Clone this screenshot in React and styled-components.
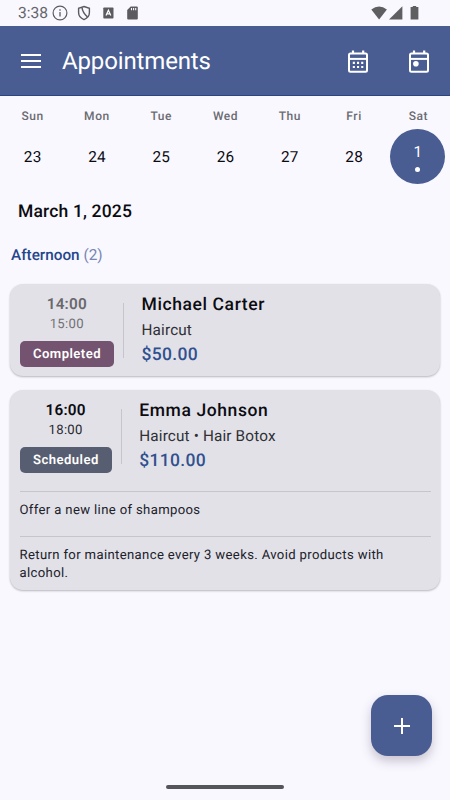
import React from "react";
import styled, { createGlobalStyle } from "styled-components";

const days = [
  { name: "Sun", date: 23 },
  { name: "Mon", date: 24 },
  { name: "Tue", date: 25 },
  { name: "Wed", date: 26 },
  { name: "Thu", date: 27 },
  { name: "Fri", date: 28 },
  { name: "Sat", date: 1, selected: true },
];

const appointments = [
  {
    start: "14:00",
    end: "15:00",
    status: "Completed",
    client: "Michael Carter",
    services: "Haircut",
    price: "$50.00",
    notes: [],
  },
  {
    start: "16:00",
    end: "18:00",
    status: "Scheduled",
    client: "Emma Johnson",
    services: "Haircut • Hair Botox",
    price: "$110.00",
    notes: [
      "Offer a new line of shampoos",
      "Return for maintenance every 3 weeks. Avoid products with alcohol.",
    ],
  },
];

const StatusIcons = () => (
  <StatusGroup>
    <svg width="16" height="16" viewBox="0 0 16 16">
      <circle cx="8" cy="8" r="6.9" fill="none" stroke="#5c5c60" strokeWidth="1.2" />
      <path d="M8 7v4.6M8 4.3v1.4" stroke="#5c5c60" strokeWidth="1.3" />
    </svg>
    <svg width="14" height="16" viewBox="0 0 14 16">
      <path
        d="M7 1.5 12.4 3.3v4.3c0 3.3-2.2 5.8-5.4 7C3.8 13.4 1.6 10.9 1.6 7.6V3.3Z"
        fill="none"
        stroke="#5c5c60"
        strokeWidth="1.4"
      />
      <path d="M5 2.5Q5.5 7.5 10.5 12" fill="none" stroke="#5c5c60" strokeWidth="1.5" />
    </svg>
    <svg width="11" height="12" viewBox="0 0 11 12">
      <rect x="0.3" y="0.5" width="10.2" height="11" rx="0.8" fill="#5c5c60" />
      <path d="M3 8.6 5.4 3.2 7.8 8.6M3.9 6.9h3" fill="none" stroke="#fff" strokeWidth="1.2" />
    </svg>
    <svg width="11" height="14" viewBox="0 0 11 14">
      <path d="M3.7.5h6.1q1 0 1 1v11q0 1-1 1H1.2q-1 0-1-1V4Z" fill="#5c5c60" />
      <path d="M4.5 2v2.2M6.6 2v2.2M8.7 2v2.2" stroke="#f9f8ff" strokeWidth="1.1" />
    </svg>
  </StatusGroup>
);

const SignalIcons = () => (
  <svg width="50" height="16" viewBox="0 0 50 16">
    <path d="M.3 4.6Q8.1-1.4 15.9 4.6L8.1 14.4Z" fill="#5f5f62" />
    <path d="M31.4 1.2v13.4H18Z" fill="#5f5f62" />
    <path d="M41.8 1.1h3.4v1h2.2v12.500h-7.800V2.100h2.200Z" fill="#5f5f62" />
  </svg>
);

const MenuIcon = () => (
  <svg width="20" height="14" viewBox="0 0 20 14">
    <path d="M0 1h20M0 7h20M0 13h20" stroke="#fff" strokeWidth="1.9" />
  </svg>
);

const CalendarIcon = ({ today }) => (
  <svg width="20" height="23" viewBox="0 0 20 23">
    <rect x="1" y="3.4" width="18" height="18.3" rx="1.5" fill="none" stroke="#fff" strokeWidth="2" />
    <path d="M1 8.9h18" stroke="#fff" strokeWidth="2" />
    <path d="M5 .5v3M15.2 .5v3" stroke="#fff" strokeWidth="2.2" />
    {today ? (
      <circle cx="6.9" cy="13.7" r="2.8" fill="#fff" />
    ) : (
      <path
        d="M4.8 12.9h2.1M9 12.9h2.1M13.2 12.9h2.1M4.8 17h2.1M9 17h2.1M13.2 17h2.1"
        stroke="#fff"
        strokeWidth="2.1"
      />
    )}
  </svg>
);

const AppointmentCard = ({ appointment }) => {
  const completed = appointment.status === "Completed";
  return (
    <Card>
      <Summary>
        <TimeColumn>
          <StartTime $muted={completed}>{appointment.start}</StartTime>
          <EndTime $muted={completed}>{appointment.end}</EndTime>
          <Badge $completed={completed}>{appointment.status}</Badge>
        </TimeColumn>
        <VerticalDivider />
        <Details>
          <Client>{appointment.client}</Client>
          <Services>{appointment.services}</Services>
          <Price>{appointment.price}</Price>
        </Details>
      </Summary>
      {appointment.notes.map((note) => (
        <Note key={note}>{note}</Note>
      ))}
    </Card>
  );
};

const App = () => {
  return (
    <Screen>
      <GlobalStyle />
      <StatusBar>
        <Clock>3:38</Clock>
        <StatusIcons />
        <SignalIcons />
      </StatusBar>
      <Toolbar>
        <IconButton aria-label="Menu">
          <MenuIcon />
        </IconButton>
        <Title>Appointments</Title>
        <Actions>
          <IconButton aria-label="Calendar">
            <CalendarIcon />
          </IconButton>
          <IconButton aria-label="Today">
            <CalendarIcon today />
          </IconButton>
        </Actions>
      </Toolbar>
      <Week>
        {days.map((day) => (
          <Day key={day.name}>
            <DayName>{day.name}</DayName>
            <DayNumber $selected={day.selected}>
              {day.date}
              {day.selected && <Dot />}
            </DayNumber>
          </Day>
        ))}
      </Week>
      <DateHeading>March 1, 2025</DateHeading>
      <Period>
        Afternoon <Count>(2)</Count>
      </Period>
      <List>
        {appointments.map((appointment) => (
          <AppointmentCard key={appointment.start} appointment={appointment} />
        ))}
      </List>
      <AddButton aria-label="Add appointment">
        <svg width="16" height="16" viewBox="0 0 16 16">
          <path d="M8 0v16M0 8h16" stroke="#fff" strokeWidth="2" />
        </svg>
      </AddButton>
      <HomeIndicator />
    </Screen>
  );
};

const GlobalStyle = createGlobalStyle`
  * {
    box-sizing: border-box;
  }
  body {
    margin: 0;
    background: #f9f8ff;
    font-family: Roboto, sans-serif;
    text-rendering: geometricPrecision;
  }
  h1, h2, h3, p {
    margin: 0;
  }
  svg {
    display: block;
    flex: none;
  }
`;

const Screen = styled.div`
  position: relative;
  display: flex;
  flex-direction: column;
  width: 450px;
  height: 800px;
  overflow: hidden;
  background: #f9f8ff;
  color: #0b0b10;
`;

const StatusBar = styled.div`
  display: flex;
  align-items: center;
  height: 26px;
  padding: 0 29px 0 18px;
`;

const Clock = styled.span`
  width: 34px;
  font-size: 15.6px;
  color: #66666a;
`;

const StatusGroup = styled.div`
  display: flex;
  flex: 1;
  align-items: center;

  svg:nth-child(2) {
    margin-left: 9px;
  }
  svg:nth-child(3) {
    margin-left: 12px;
  }
  svg:nth-child(4) {
    margin-left: 13px;
  }
`;

const Toolbar = styled.header`
  display: flex;
  align-items: center;
  height: 70px;
  padding: 1px 21px 0;
  background: #495d92;
  border-bottom: 1px solid #2b4583;
`;

const IconButton = styled.button`
  padding: 0;
  border: 0;
  background: none;
`;

const Title = styled.h1`
  margin-left: 21px;
  font-size: 24px;
  font-weight: 400;
  line-height: 30px;
  letter-spacing: -0.14px;
  color: #fff;
`;

const Actions = styled.div`
  display: flex;
  gap: 41px;
  margin-left: auto;
`;

const Week = styled.div`
  display: grid;
  grid-template-columns: repeat(7, 1fr);
  height: 89px;
  padding-top: 11px;
`;

const Day = styled.div`
  display: flex;
  flex-direction: column;
  align-items: center;
`;

const DayName = styled.span`
  font-size: 12px;
  font-weight: 500;
  line-height: 18px;
  letter-spacing: 0.55px;
  color: #6b6b72;
  padding-left: 1px;
`;

const DayNumber = styled.div`
  display: flex;
  flex-direction: column;
  align-items: center;
  justify-content: center;
  gap: 5px;
  width: 55px;
  height: 55px;
  margin-top: 4px;
  padding-left: ${({ $selected }) => ($selected ? 0 : "1.2px")};
  border-radius: 50%;
  font-size: 15.3px;
  line-height: 20px;
  letter-spacing: 0.27px;
  background: ${({ $selected }) => ($selected ? "#495d92" : "transparent")};
  color: ${({ $selected }) => ($selected ? "#fff" : "#0b0b10")};
`;

const Dot = styled.span`
  width: 5px;
  height: 5px;
  border-radius: 50%;
  background: #fff;
`;

const DateHeading = styled.h2`
  padding: 16px 18px 0;
  font-size: 17.5px;
  font-weight: 500;
  line-height: 22px;
  letter-spacing: 0.16px;
`;

const Period = styled.h3`
  padding: 21px 11px 0;
  font-size: 15.3px;
  font-weight: 500;
  line-height: 22px;
  color: #26468c;
`;

const Count = styled.span`
  font-weight: 400;
  color: #7786b2;
`;

const List = styled.main`
  display: flex;
  flex-direction: column;
  gap: 14px;
  padding: 18px 10.5px 0 10px;
`;

const Card = styled.article`
  padding: 9px 9px 9px 9.5px;
  border-radius: 13px;
  background: #e2e1e8;
  box-shadow: 0 1px 2px rgba(0, 0, 0, 0.22), 0 1px 3px rgba(0, 0, 0, 0.06);
`;

const Summary = styled.div`
  display: flex;
  height: 74px;
`;

const TimeColumn = styled.div`
  display: flex;
  flex-direction: column;
  align-items: center;
`;

const StartTime = styled.span`
  font-size: 15.3px;
  font-weight: 600;
  line-height: 22px;
  letter-spacing: 0.2px;
  color: ${({ $muted }) => ($muted ? "#68686d" : "#0b0b10")};
`;

const EndTime = styled.span`
  padding-top: 1px;
  font-size: 13.1px;
  line-height: 17px;
  letter-spacing: 0.3px;
  color: ${({ $muted }) => ($muted ? "#717176" : "#27272d")};
`;

const Badge = styled.span`
  height: 26px;
  margin-top: 8px;
  padding: 1px 13px 0 13.5px;
  border-radius: 5px;
  font-size: 13.1px;
  font-weight: 600;
  line-height: 26px;
  letter-spacing: 0.45px;
  color: #fff;
  background: ${({ $completed }) => ($completed ? "#73536f" : "#585e71")};
`;

const VerticalDivider = styled.div`
  width: 1px;
  height: 55px;
  margin: 10px 17.5px 0 9px;
  background: #c5c5cd;
`;

const Details = styled.div`
  display: flex;
  flex-direction: column;
  padding-top: 1px;
`;

const Client = styled.span`
  font-size: 17.5px;
  font-weight: 500;
  line-height: 22px;
  letter-spacing: 0.6px;
`;

const Services = styled.span`
  margin-top: 4px;
  font-size: 15.3px;
  line-height: 21px;
  letter-spacing: 0.15px;
  color: #303036;
`;

const Price = styled.span`
  margin-top: 2px;
  font-size: 17.5px;
  font-weight: 500;
  line-height: 24px;
  letter-spacing: 0.3px;
  color: #30508f;
`;

const Note = styled.p`
  margin-top: 16.5px;
  padding-top: 10px;
  border-top: 1px solid #c5c5cd;
  font-size: 13.1px;
  line-height: 17.5px;
  letter-spacing: 0.36px;
  color: #202029;

  &:first-of-type {
    margin-top: 18px;
  }

  &:last-child {
    margin-bottom: -1px;
  }
`;

const AddButton = styled.button`
  position: absolute;
  right: 18px;
  bottom: 44px;
  display: flex;
  align-items: center;
  justify-content: center;
  width: 61px;
  height: 61px;
  padding: 0;
  border: 0;
  border-radius: 17px;
  background: #495d92;
  box-shadow: 0 5px 11px rgba(50, 30, 60, 0.25);
`;

const HomeIndicator = styled.div`
  position: absolute;
  left: 166px;
  bottom: 11px;
  width: 118px;
  height: 4px;
  border-radius: 2px;
  background: #555659;
`;

export default App;
